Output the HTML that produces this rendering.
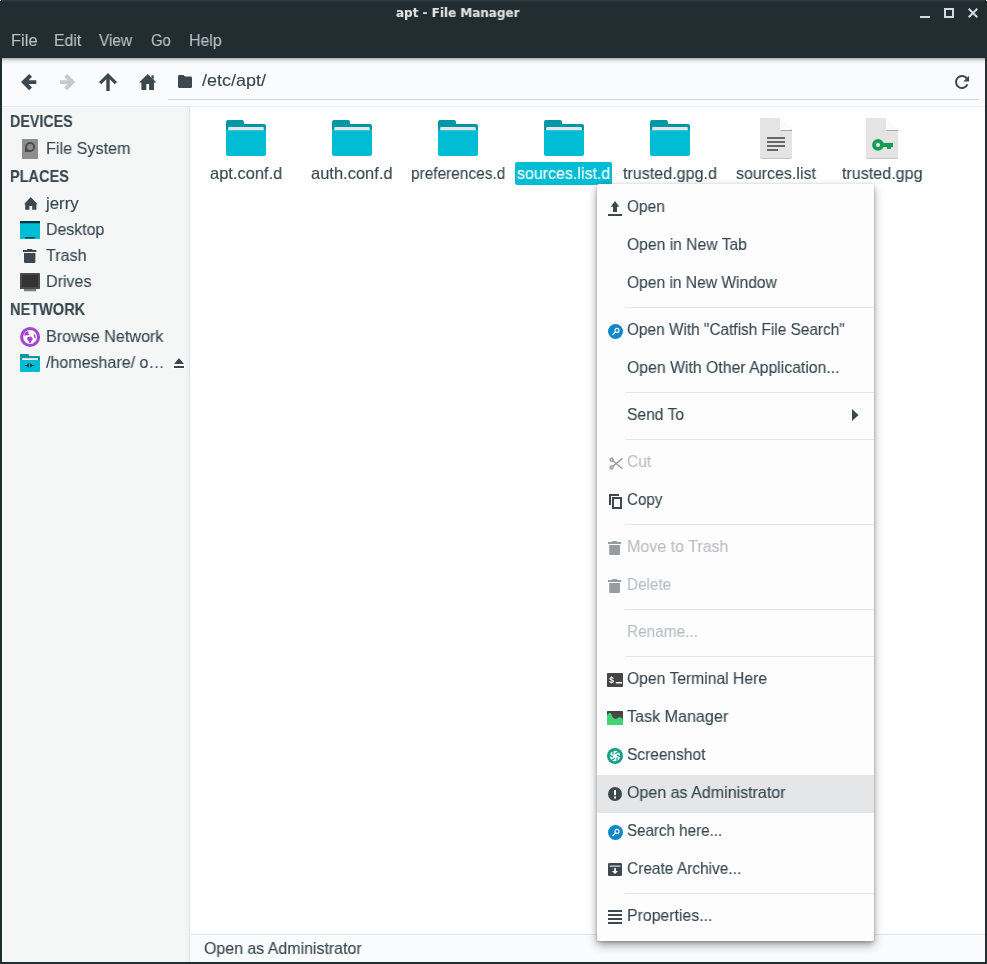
<!DOCTYPE html>
<html lang="en"><head><meta charset="utf-8"><title>apt - File Manager</title>
<style>
*{box-sizing:border-box;margin:0;padding:0}
html,body{width:987px;height:964px;overflow:hidden;background:#222d32}
body{position:relative;font-family:"Liberation Sans",sans-serif;font-size:16.5px;color:#37474f}
.abs{position:absolute}
.t{position:absolute;white-space:nowrap;line-height:20px;transform-origin:0 0;display:block;will-change:transform;-webkit-text-stroke:.12px currentColor}
#titlebar{position:absolute;left:0;top:0;width:987px;height:58px;background:linear-gradient(to bottom,#2d3a40 0,#2d3a40 1px,#27333a 1px,#27333a 2px,#222d32 2px)}
#corner-l,#corner-r{position:absolute;top:0;width:2px;height:2px;background:#131d22}
#corner-l:after,#corner-r:after{content:'';position:absolute;top:0;width:1px;height:1px;background:#fff}
#corner-l:after{left:0}#corner-r:after{right:0}
#toolbar{position:absolute;left:2px;top:58px;width:983px;height:48px;background:#fafbfc}
#tbshadow{position:absolute;left:2px;top:58px;width:983px;height:7px;background:linear-gradient(to bottom,rgba(0,0,0,.32),rgba(0,0,0,.12) 30%,rgba(0,0,0,.03) 65%,rgba(0,0,0,0))}
#tbline{position:absolute;left:2px;top:106px;width:983px;height:1px;background:#e8eaeb}
#pathline{position:absolute;left:168px;top:99px;width:811px;height:1px;background:#d5d9db}
#sidebar{position:absolute;left:2px;top:107px;width:187px;height:855px;background:linear-gradient(to right,#f5f7f7 0,#f5f7f7 182px,#eff1f2 187px)}
#sideline{position:absolute;left:189px;top:107px;width:1px;height:855px;background:#e1e3e5}
#view{position:absolute;left:190px;top:107px;width:795px;height:827px;background:#fff}
#statusline{position:absolute;left:190px;top:934px;width:795px;height:1px;background:#e3e6e8}
#status{position:absolute;left:190px;top:935px;width:795px;height:27px;background:#fafbfc}
#sel{position:absolute;left:515px;top:162px;width:97px;height:23px;background:#00bcd4;border-radius:2px}
#menu{position:absolute;left:597px;top:184px;width:277px;height:757px;background:#fdfdfd;border-radius:2px;box-shadow:0 4px 10px rgba(0,0,0,.38),0 1px 3px rgba(0,0,0,.24)}
#menu .sep{position:absolute;left:28px;right:0;height:1px;background:#e4e5e6}
#menu .hl{position:absolute;left:0;right:0;height:38px;background:#e4e6e7}
svg{position:absolute;overflow:visible}
</style></head>
<body>
<div id="titlebar"></div><div id="corner-l" style="left:0"></div><div id="corner-r" style="right:0"></div>
<div id="toolbar"></div><div id="tbshadow"></div><div id="tbline"></div><div id="pathline"></div>
<div id="sidebar"></div><div id="sideline"></div>
<div id="view"></div><div id="statusline"></div><div id="status"></div>
<div id="sel"></div>
<div id="menu">
<div class="sep" style="top:123px"></div>
<div class="sep" style="top:208px"></div>
<div class="sep" style="top:255px"></div>
<div class="sep" style="top:340px"></div>
<div class="sep" style="top:425px"></div>
<div class="sep" style="top:472px"></div>
<div class="hl" style="top:591px"></div>
<div class="sep" style="top:709px"></div>
</div>
<svg style="left:920px;top:16px" width="10" height="2" viewBox="0 0 10 2"><rect width="10" height="2" fill="#d3d9dc"/></svg>
<svg style="left:944px;top:8px" width="10" height="10" viewBox="0 0 10 10"><rect x="1" y="1" width="8" height="8" fill="none" stroke="#d3d9dc" stroke-width="2"/></svg>
<svg style="left:968px;top:8px" width="10" height="10" viewBox="0 0 10 10"><path d="M.7.700l8.600 8.600M9.300.700L.7 9.300" stroke="#d3d9dc" stroke-width="2" fill="none"/></svg>
<svg style="left:21px;top:74px" width="16" height="17" viewBox="0 0 16 17"><path d="M8.200 0L11 2.800 7.600 6.200H15.300V10H7.600L11 13.400 8.200 16.200 0 8.100z" fill="#3c484e"/></svg>
<svg style="left:60px;top:74px" width="16" height="17" viewBox="0 0 16 17"><g transform="translate(15.300 0) scale(-1 1)"><path d="M8.200 0L11 2.800 7.600 6.200H15.300V10H7.600L11 13.400 8.200 16.200 0 8.100z" fill="#c6cacc"/></g></svg>
<svg style="left:99px;top:73px" width="18" height="18" viewBox="0 0 18 18"><path d="M9 0L18 9 15.700 11.300 10.700 6.300V18H7.300V6.300L2.300 11.300 0 9z" fill="#3c484e"/></svg>
<svg style="left:139.4px;top:74px" width="17.5" height="16" viewBox="0 0 17.5 16"><path d="M8.750 0L17.500 8.600H15V16H10.100V10H7.300V16H2.400V8.600H0z" fill="#3c484e"/><path d="M12.500 1.200h2.200v4.500l-2.200-2.200z" fill="#3c484e"/></svg>
<svg style="left:178px;top:75px" width="14" height="13" viewBox="0 0 14 13"><path d="M1.300 0H5.600L7 1.600H12.700A1.300 1.300 0 0 1 14 2.900V11.700A1.300 1.300 0 0 1 12.700 13H1.300A1.300 1.300 0 0 1 0 11.700V1.300A1.300 1.300 0 0 1 1.300 0z" fill="#3c484e"/></svg>
<svg style="left:955px;top:75px" width="14" height="14" viewBox="0 0 14 14"><path d="M11.800 3.400A6 6 0 1 0 12.500 9.400" fill="none" stroke="#3c484e" stroke-width="2"/><path d="M14 .8V6.500H8.300z" fill="#3c484e"/></svg>
<svg style="left:22px;top:139px" width="16" height="20" viewBox="0 0 16 20"><rect width="16" height="20" rx=".8" fill="#8e8e8e"/><path d="M3 8V12.900H8.500z" fill="#4c4c4c"/><circle cx="8.100" cy="8" r="4" fill="#8e8e8e" stroke="#4c4c4c" stroke-width="2"/></svg>
<svg style="left:23.8px;top:197.1px" width="13.5" height="12.8" viewBox="0 0 13.5 12.8"><path d="M6.750 0L13.500 7.200H12.400V12.800H8.200V9H5.400V12.800H1.200V7.200H0z" fill="#3c484e"/></svg>
<svg style="left:20px;top:221px" width="20" height="18" viewBox="0 0 20 18"><rect width="20" height="18" rx=".8" fill="#00bcd4"/><path d="M.3 0h19.400a.5 .5 0 0 1 .3 .5V2.200H0V.5a.5 .5 0 0 1 .3-.5z" fill="#00373f"/><rect x="5" y="16" width="10" height="1.600" fill="#004d57"/></svg>
<svg style="left:23px;top:249px" width="13.4" height="14" viewBox="0 0 13.4 14"><path d="M4.500 0h4.400l.8 1h3.700v2H0v-2h3.700z" fill="#3c484e"/><path d="M1 4h11.400v8.800a1.200 1.200 0 0 1-1.200 1.200H2.200A1.200 1.200 0 0 1 1 12.800z" fill="#3c484e"/></svg>
<svg style="left:20px;top:273px" width="20" height="18.5" viewBox="0 0 20 18.5"><rect x="4" y="15" width="12" height="3.300" rx=".6" fill="#7d7d7d"/><rect width="20" height="16" rx=".8" fill="#4a4a4a"/><rect x="2" y="2" width="16" height="12" fill="#333"/></svg>
<svg style="left:20px;top:327px" width="20" height="20" viewBox="0 0 20 20"><circle cx="10.100" cy="10" r="8.500" fill="#fff" stroke="#a444d4" stroke-width="3.100"/><path d="M4.200 7.200L5.500 5.200 7.600 4.200 8.800 4.800 8.200 6.400 9.400 7.400 8 8.600 6.400 8 4.800 9z" fill="#a444d4"/><path d="M7.200 10.600L8.600 9.800 10.800 9.600 12.800 11.200 12.400 13 11.200 14.200 10.600 16 9.400 16.200 8.600 14 7.200 12.400z" fill="#a444d4"/><path d="M13.800 6.400L15.200 8 15.800 10.600 14.800 11.600 14 9.400z" fill="#a444d4"/></svg>
<svg style="left:20px;top:354px" width="20" height="18" viewBox="0 0 20 18"><path d="M0 1a1 1 0 0 1 1-1h7a1 1 0 0 1 1 1v1h10a1 1 0 0 1 1 1v6H0z" fill="#0097a7"/><path d="M2 4.100h16v3H2z" fill="#f6e9e8"/><path d="M0 6h20v11a1 1 0 0 1-1 1H1a1 1 0 0 1-1-1z" fill="#00bcd4"/><path d="M6.500 11.500L8.900 9.100V13.900zM12.500 11.500L10.100 9.100V13.900z" fill="#00363d"/><path d="M5 11h2.500v1H5zM11.500 11H14v1h-2.500z" fill="#00363d"/></svg>
<svg style="left:173px;top:357px" width="12" height="12" viewBox="0 0 12 12"><path d="M6 1L11 7H1z" fill="#3c484e" stroke="#fff" stroke-width="1.400" paint-order="stroke"/><rect x="1" y="9" width="10" height="2" fill="#3c484e" stroke="#fff" stroke-width="1.400" paint-order="stroke"/></svg>
<svg style="left:226px;top:120px" width="40" height="36" viewBox="0 0 40 36"><path d="M0 2a2 2 0 0 1 2-2h14a2 2 0 0 1 2 2v2h20a2 2 0 0 1 2 2v10H0z" fill="#0097a7"/><path d="M2.2 8a1 1 0 0 1 1-1h33.600a1 1 0 0 1 1 1v5H2.200z" fill="#e9e5e5"/><path d="M0 10.2h40V34a2 2 0 0 1-2 2H2a2 2 0 0 1-2-2z" fill="#00bcd4"/><path d="M0 10.2h40v.6H0z" fill="#19c6da" opacity=".6"/></svg>
<svg style="left:332px;top:120px" width="40" height="36" viewBox="0 0 40 36"><path d="M0 2a2 2 0 0 1 2-2h14a2 2 0 0 1 2 2v2h20a2 2 0 0 1 2 2v10H0z" fill="#0097a7"/><path d="M2.2 8a1 1 0 0 1 1-1h33.600a1 1 0 0 1 1 1v5H2.200z" fill="#e9e5e5"/><path d="M0 10.2h40V34a2 2 0 0 1-2 2H2a2 2 0 0 1-2-2z" fill="#00bcd4"/><path d="M0 10.2h40v.6H0z" fill="#19c6da" opacity=".6"/></svg>
<svg style="left:438px;top:120px" width="40" height="36" viewBox="0 0 40 36"><path d="M0 2a2 2 0 0 1 2-2h14a2 2 0 0 1 2 2v2h20a2 2 0 0 1 2 2v10H0z" fill="#0097a7"/><path d="M2.2 8a1 1 0 0 1 1-1h33.600a1 1 0 0 1 1 1v5H2.200z" fill="#e9e5e5"/><path d="M0 10.2h40V34a2 2 0 0 1-2 2H2a2 2 0 0 1-2-2z" fill="#00bcd4"/><path d="M0 10.2h40v.6H0z" fill="#19c6da" opacity=".6"/></svg>
<svg style="left:544px;top:120px" width="40" height="36" viewBox="0 0 40 36"><path d="M0 2a2 2 0 0 1 2-2h14a2 2 0 0 1 2 2v2h20a2 2 0 0 1 2 2v10H0z" fill="#0097a7"/><path d="M2.2 8a1 1 0 0 1 1-1h33.600a1 1 0 0 1 1 1v5H2.200z" fill="#e9e5e5"/><path d="M0 10.2h40V34a2 2 0 0 1-2 2H2a2 2 0 0 1-2-2z" fill="#00bcd4"/><path d="M0 10.2h40v.6H0z" fill="#19c6da" opacity=".6"/></svg>
<svg style="left:650px;top:120px" width="40" height="36" viewBox="0 0 40 36"><path d="M0 2a2 2 0 0 1 2-2h14a2 2 0 0 1 2 2v2h20a2 2 0 0 1 2 2v10H0z" fill="#0097a7"/><path d="M2.2 8a1 1 0 0 1 1-1h33.600a1 1 0 0 1 1 1v5H2.200z" fill="#e9e5e5"/><path d="M0 10.2h40V34a2 2 0 0 1-2 2H2a2 2 0 0 1-2-2z" fill="#00bcd4"/><path d="M0 10.2h40v.6H0z" fill="#19c6da" opacity=".6"/></svg>
<svg style="left:760px;top:118px" width="32" height="41" viewBox="0 0 32 41"><path d="M2 0H20V12H32V39a2 2 0 0 1-2 2H2a2 2 0 0 1-2-2V2A2 2 0 0 1 2 0z" fill="#bcbcbc"/><path d="M2 0H20V12H32V38.200a2 2 0 0 1-2 2H2a2 2 0 0 1-2-2V2A2 2 0 0 1 2 0z" fill="#e4e4e4"/><path d="M20.300 11.500h11.700v1.400H21.700a1.400 1.400 0 0 1-1.400-1.400z" fill="#a6a6a6"/><path d="M20 0L32 12H21.200a1.200 1.200 0 0 1-1.200-1.200z" fill="#fafafa"/><rect x="7" y="19" width="18" height="2" fill="#666"/><rect x="7" y="23" width="18" height="2" fill="#666"/><rect x="7" y="27" width="18" height="2" fill="#666"/><rect x="7" y="31" width="11" height="2" fill="#666"/></svg>
<svg style="left:866px;top:118px" width="32" height="41" viewBox="0 0 32 41"><path d="M2 0H20V12H32V39a2 2 0 0 1-2 2H2a2 2 0 0 1-2-2V2A2 2 0 0 1 2 0z" fill="#bcbcbc"/><path d="M2 0H20V12H32V38.200a2 2 0 0 1-2 2H2a2 2 0 0 1-2-2V2A2 2 0 0 1 2 0z" fill="#e4e4e4"/><path d="M20.300 11.500h11.700v1.400H21.700a1.400 1.400 0 0 1-1.400-1.400z" fill="#a6a6a6"/><path d="M20 0L32 12H21.200a1.200 1.200 0 0 1-1.200-1.200z" fill="#fafafa"/><circle cx="12" cy="26.900" r="4" fill="none" stroke="#0f9d58" stroke-width="3.800"/><rect x="16" y="24.900" width="11" height="4.100" fill="#0f9d58"/><rect x="21" y="28.500" width="4" height="2.400" fill="#0f9d58"/></svg>
<svg style="left:608px;top:201px" width="14" height="15" viewBox="0 0 14 15"><path d="M7 0L11.300 5.800H9V11H5V5.800H2.700z" fill="#3c484e"/><rect y="13" width="14" height="2" fill="#3c484e"/></svg>
<svg style="left:608px;top:324px" width="15" height="15" viewBox="0 0 15 15"><circle cx="7.500" cy="7.500" r="7.500" fill="#0f88c8"/><circle cx="9" cy="6.400" r="2" fill="none" stroke="#fff" stroke-width="1.100"/><path d="M7.500 7.900L4.900 10.500" stroke="#fff" stroke-width="1.300" stroke-linecap="round"/></svg>
<svg style="left:852px;top:409px" width="7" height="12" viewBox="0 0 7 12"><path d="M0 0L6.600 6 0 12z" fill="#3c484e"/></svg>
<svg style="left:608.6px;top:456.8px" width="14" height="13" viewBox="0 0 14 13"><g fill="none" stroke="#959da1" stroke-width="1.400"><circle cx="2.600" cy="2.700" r="1.500"/><circle cx="2.600" cy="10.500" r="1.500"/><path d="M3.800 3.800L13.400 11.800M3.800 9.400L13.400 1.400"/></g></svg>
<svg style="left:609px;top:494px" width="13" height="15" viewBox="0 0 13 15"><path d="M0 0H10V2H2V11H0z" fill="#3c484e"/><rect x="4" y="4" width="8" height="10" fill="none" stroke="#3c484e" stroke-width="2"/></svg>
<svg style="left:608px;top:541px" width="13.2" height="14" viewBox="0 0 13.2 14"><path d="M4.600 0h4l.8 1h3.800v2H0v-2h3.800z" fill="#959da1"/><path d="M1.200 4h10.800v8.900a1.100 1.100 0 0 1-1.100 1.100H2.300a1.100 1.100 0 0 1-1.100-1.100z" fill="#959da1"/></svg>
<svg style="left:608px;top:579px" width="13.2" height="14" viewBox="0 0 13.2 14"><path d="M4.600 0h4l.8 1h3.800v2H0v-2h3.800z" fill="#959da1"/><path d="M1.200 4h10.800v8.900a1.100 1.100 0 0 1-1.100 1.100H2.300a1.100 1.100 0 0 1-1.100-1.100z" fill="#959da1"/></svg>
<svg style="will-change:transform;left:607px;top:673px" width="16" height="14" viewBox="0 0 16 14"><rect width="16" height="14" rx=".7" fill="#454545"/><text x="1.900" y="9.700" font-family="Liberation Mono,monospace" font-weight="700" font-size="8.500" fill="#fff">$</text><rect x="8.800" y="9" width="6.200" height="1.500" fill="#fff"/></svg>
<svg style="left:607px;top:711px" width="16" height="14" viewBox="0 0 16 14"><rect width="16" height="14" rx=".5" fill="#444"/><path d="M0 3.500h16M0 5.500h16" stroke="#555" stroke-width=".6"/><path d="M0 14V4.500C1 2.300 2.200 1.600 3.300 2 4.700 2.600 5.200 6.600 7 7.600 9 8.600 10.500 6.500 12.500 6.200 14.300 6 15.300 7.400 16 8.600V14z" fill="#3fd671"/></svg>
<svg style="left:607px;top:748px" width="16" height="16" viewBox="0 0 16 16"><circle cx="8" cy="8" r="8" fill="#14a085"/><circle cx="8" cy="8" r="5.200" fill="#fff"/><path d="M8 8m0-2.300l4.300-2.500" transform="rotate(0 8 8)" stroke="#14a085" stroke-width="1.300" fill="none"/><path d="M8 8m0-2.300l4.300-2.500" transform="rotate(60 8 8)" stroke="#14a085" stroke-width="1.300" fill="none"/><path d="M8 8m0-2.300l4.300-2.500" transform="rotate(120 8 8)" stroke="#14a085" stroke-width="1.300" fill="none"/><path d="M8 8m0-2.300l4.300-2.500" transform="rotate(180 8 8)" stroke="#14a085" stroke-width="1.300" fill="none"/><path d="M8 8m0-2.300l4.300-2.500" transform="rotate(240 8 8)" stroke="#14a085" stroke-width="1.300" fill="none"/><path d="M8 8m0-2.300l4.300-2.500" transform="rotate(300 8 8)" stroke="#14a085" stroke-width="1.300" fill="none"/><circle cx="8" cy="8" r="1.900" fill="#fff"/></svg>
<svg style="left:608px;top:787px" width="14" height="14" viewBox="0 0 14 14"><circle cx="7" cy="7" r="7" fill="#3c484e"/><rect x="6" y="3" width="2" height="5.200" fill="#fff"/><rect x="6" y="9.500" width="2" height="2" fill="#fff"/></svg>
<svg style="left:608px;top:825px" width="15" height="15" viewBox="0 0 15 15"><circle cx="7.500" cy="7.500" r="7.500" fill="#0f88c8"/><circle cx="9" cy="6.400" r="2" fill="none" stroke="#fff" stroke-width="1.100"/><path d="M7.500 7.900L4.900 10.500" stroke="#fff" stroke-width="1.300" stroke-linecap="round"/></svg>
<svg style="left:608px;top:863px" width="14" height="13" viewBox="0 0 14 13"><rect width="14" height="13" rx="1.300" fill="#3c484e"/><rect x="1.700" y="2.600" width="10.600" height="1" fill="#fff"/><path d="M6 5.300h2v2.600h2L7 10.900 4 7.900h2z" fill="#fff"/></svg>
<svg style="left:608px;top:910px" width="14" height="14" viewBox="0 0 14 14"><rect y="0" width="14" height="2" fill="#3c484e"/><rect y="4" width="14" height="2" fill="#3c484e"/><rect y="8" width="14" height="2" fill="#3c484e"/><rect y="12" width="14" height="2" fill="#3c484e"/></svg>
<span class="t" id="t0" style="left:395.7px;top:3.35px;font-size:12px;font-family:'DejaVu Sans',sans-serif;font-weight:700;color:#dfe3e5;transform:scaleX(0.9968);">apt - File Manager</span>
<span class="t" id="t1" style="left:10.5px;top:30.18px;color:#b9c1c5;transform:scaleX(0.9980);">File</span>
<span class="t" id="t2" style="left:53.7px;top:30.18px;color:#b9c1c5;transform:scaleX(0.9596);">Edit</span>
<span class="t" id="t3" style="left:99.4px;top:30.18px;color:#b9c1c5;transform:scaleX(0.9324);">View</span>
<span class="t" id="t4" style="left:151.2px;top:30.18px;color:#b9c1c5;transform:scaleX(0.8988);">Go</span>
<span class="t" id="t5" style="left:188.5px;top:30.18px;color:#b9c1c5;transform:scaleX(0.9625);">Help</span>
<span class="t" id="t6" style="left:201.9px;top:70.38px;transform:scaleX(1.0894);">/etc/apt/</span>
<span class="t" id="t7" style="left:10.0px;top:111.18px;font-weight:700;transform:scaleX(0.8641);">DEVICES</span>
<span class="t" id="t8" style="left:45.7px;top:137.98px;transform:scaleX(0.9798);">File System</span>
<span class="t" id="t9" style="left:10.0px;top:166.18px;font-weight:700;transform:scaleX(0.8794);">PLACES</span>
<span class="t" id="t10" style="left:45.8px;top:192.98px;transform:scaleX(1.0215);">jerry</span>
<span class="t" id="t11" style="left:45.7px;top:218.78px;transform:scaleX(0.9634);">Desktop</span>
<span class="t" id="t12" style="left:45.9px;top:244.78px;transform:scaleX(0.9739);">Trash</span>
<span class="t" id="t13" style="left:45.7px;top:270.78px;transform:scaleX(0.9733);">Drives</span>
<span class="t" id="t14" style="left:10.0px;top:299.18px;font-weight:700;transform:scaleX(0.8821);">NETWORK</span>
<span class="t" id="t15" style="left:45.6px;top:325.78px;transform:scaleX(0.9777);">Browse Network</span>
<span class="t" id="t16" style="left:46.2px;top:351.98px;transform:scaleX(0.9712);">/homeshare/ o…</span>
<span class="t" id="t17" style="left:210.2px;top:163.08px;transform:scaleX(0.9972);">apt.conf.d</span>
<span class="t" id="t18" style="left:310.9px;top:163.08px;transform:scaleX(0.9981);">auth.conf.d</span>
<span class="t" id="t19" style="left:411.1px;top:163.08px;transform:scaleX(0.9343);">preferences.d</span>
<span class="t" id="t20" style="left:517.4px;top:163.08px;color:#ffffff;transform:scaleX(0.9689);">sources.list.d</span>
<span class="t" id="t21" style="left:623.0px;top:163.08px;transform:scaleX(0.9747);">trusted.gpg.d</span>
<span class="t" id="t22" style="left:736.1px;top:163.08px;transform:scaleX(0.9683);">sources.list</span>
<span class="t" id="t23" style="left:842.0px;top:163.08px;transform:scaleX(0.9748);">trusted.gpg</span>
<span class="t" id="t24" style="left:204.2px;top:937.98px;transform:scaleX(0.9658);">Open as Administrator</span>
<span class="t" id="t25" style="left:626.8px;top:196.18px;transform:scaleX(0.9367);">Open</span>
<span class="t" id="t26" style="left:626.8px;top:234.18px;transform:scaleX(0.9495);">Open in New Tab</span>
<span class="t" id="t27" style="left:626.8px;top:272.18px;transform:scaleX(0.9443);">Open in New Window</span>
<span class="t" id="t28" style="left:626.8px;top:319.18px;transform:scaleX(0.9322);">Open With &quot;Catfish File Search&quot;</span>
<span class="t" id="t29" style="left:626.8px;top:357.18px;transform:scaleX(0.9578);">Open With Other Application...</span>
<span class="t" id="t30" style="left:626.8px;top:404.18px;transform:scaleX(0.9473);">Send To</span>
<span class="t" id="t31" style="left:626.8px;top:451.18px;color:#b8bec1;transform:scaleX(0.9398);">Cut</span>
<span class="t" id="t32" style="left:626.8px;top:489.18px;transform:scaleX(0.9195);">Copy</span>
<span class="t" id="t33" style="left:626.8px;top:536.18px;color:#b8bec1;transform:scaleX(0.9710);">Move to Trash</span>
<span class="t" id="t34" style="left:626.8px;top:574.18px;color:#b8bec1;transform:scaleX(0.9255);">Delete</span>
<span class="t" id="t35" style="left:626.8px;top:621.18px;color:#b8bec1;transform:scaleX(0.9311);">Rename...</span>
<span class="t" id="t36" style="left:626.8px;top:668.18px;transform:scaleX(0.9499);">Open Terminal Here</span>
<span class="t" id="t37" style="left:626.8px;top:706.18px;transform:scaleX(0.9768);">Task Manager</span>
<span class="t" id="t38" style="left:626.8px;top:744.18px;transform:scaleX(0.9389);">Screenshot</span>
<span class="t" id="t39" style="left:626.8px;top:782.18px;transform:scaleX(0.9712);">Open as Administrator</span>
<span class="t" id="t40" style="left:626.8px;top:820.18px;transform:scaleX(0.9183);">Search here...</span>
<span class="t" id="t41" style="left:626.8px;top:858.18px;transform:scaleX(0.9369);">Create Archive...</span>
<span class="t" id="t42" style="left:626.8px;top:905.18px;transform:scaleX(0.9600);">Properties...</span>
</body></html>
